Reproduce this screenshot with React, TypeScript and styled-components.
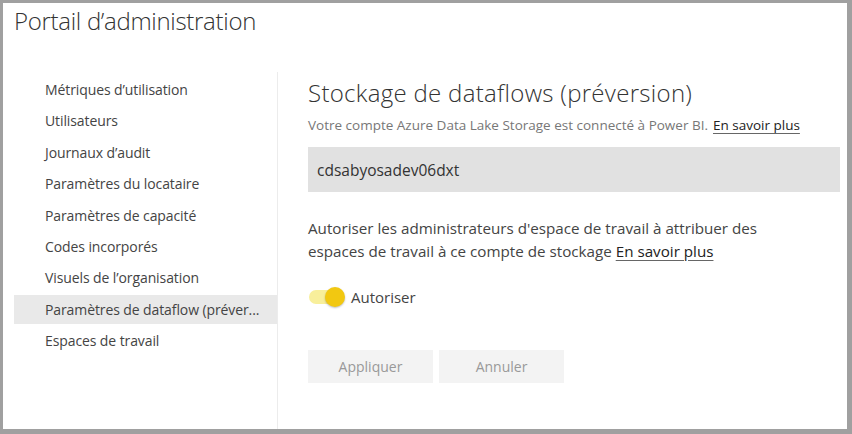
import React from "react";
import styled, { createGlobalStyle } from "styled-components";

const Global = createGlobalStyle`
  html, body { margin: 0; padding: 0; background: #a0a0a0; }
  body { font-family: "Segoe UI", "Open Sans", "Noto Sans", sans-serif; }
  * { box-sizing: border-box; }
`;

const Frame = styled.div`
  width: 852px;
  height: 434px;
  padding: 3px 5px 5px 3px;
  background: #a0a0a0;
`;

const Window = styled.div`
  width: 100%;
  height: 100%;
  background: #fff;
  display: flex;
  flex-direction: column;
  overflow: hidden;
`;

const Title = styled.h1`
  margin: 0;
  padding: 2px 0 0 11px;
  height: 69px;
  font-family: "Open Sans", sans-serif;
  font-weight: 300;
  font-size: 24px;
  line-height: 32px;
  color: #333;
  letter-spacing: -0.3px;
`;

const Body = styled.div`
  flex: 1;
  display: flex;
`;

const Sidebar = styled.nav`
  width: 275px;
  padding: 3px 0 0 11px;
  border-right: 1px solid #ececec;
  display: flex;
  flex-direction: column;
  gap: 2.4px;
`;

const NavItem = styled.div<{ $active?: boolean }>`
  height: 29px;
  display: flex;
  align-items: center;
  padding-left: 31px;
  font-size: 14px;
  color: #444;
  background: ${(p) => (p.$active ? "#e9e9e9" : "transparent")};
  white-space: nowrap;
  font-family: "Open Sans", sans-serif;
  letter-spacing: -0.1px;
`;

const Panel = styled.section`
  flex: 1;
  padding: 5px 7px 0 30px;
  display: flex;
  flex-direction: column;
`;

const Heading = styled.h2`
  margin: 0;
  font-family: "Open Sans", sans-serif;
  font-weight: 300;
  font-size: 24px;
  line-height: 32px;
  color: #333;
  letter-spacing: 0.3px;
`;

const Sub = styled.p`
  margin: 7px 0 0;
  font-size: 13.5px;
  line-height: 18px;
  color: #777;
  font-family: "Open Sans", sans-serif;
  white-space: nowrap;
`;

const Link = styled.a`
  color: #222;
  text-decoration: underline;
  text-underline-offset: 3px;
  text-decoration-color: #666;
`;

const SubLink = styled(Link)`
  margin-left: 5px;
`;

const Input = styled.div`
  margin-top: 13px;
  height: 45px;
  background: #e1e1e1;
  display: flex;
  align-items: center;
  padding-left: 9px;
  font-size: 15.5px;
  color: #333;
  font-family: "Open Sans", sans-serif;
`;

const Para = styled.p`
  margin: 25px 0 0;
  font-size: 15.2px;
  line-height: 23px;
  color: #444;
  width: 480px;
  font-family: "Open Sans", sans-serif;
`;

const ToggleRow = styled.label`
  margin-top: 24px;
  display: flex;
  align-items: center;
  gap: 6px;
  font-size: 15px;
  color: #444;
  font-family: "Open Sans", sans-serif;
`;

const Track = styled.span`
  position: relative;
  width: 37px;
  height: 20px;
  display: inline-block;
`;

const TrackBar = styled.span`
  position: absolute;
  left: 1px;
  top: 3px;
  width: 30px;
  height: 14px;
  border-radius: 7px;
  background: #f8ef9b;
`;

const Knob = styled.span`
  position: absolute;
  right: 0;
  top: 0;
  width: 20px;
  height: 20px;
  border-radius: 50%;
  background: #f2c811;
  box-shadow: 0 1px 2px rgba(0, 0, 0, 0.25);
`;

const Buttons = styled.div`
  margin-top: 43px;
  display: flex;
  gap: 6px;
`;

const Button = styled.button`
  width: 125px;
  height: 33px;
  border: none;
  background: #f3f3f3;
  color: #999;
  font-size: 14px;
  font-family: "Open Sans", sans-serif;
  padding: 0;
`;

const items = [
  "Métriques d’utilisation",
  "Utilisateurs",
  "Journaux d’audit",
  "Paramètres du locataire",
  "Paramètres de capacité",
  "Codes incorporés",
  "Visuels de l’organisation",
  "Paramètres de dataflow (préver...",
  "Espaces de travail",
];

export default function App() {
  return (
    <>
      <Global />
      <Frame>
        <Window>
          <Title>Portail d’administration</Title>
          <Body>
            <Sidebar>
              {items.map((t, i) => (
                <NavItem key={t} $active={i === 7}>
                  {t}
                </NavItem>
              ))}
            </Sidebar>
            <Panel>
              <Heading>Stockage de dataflows (préversion)</Heading>
              <Sub>
                Votre compte Azure Data Lake Storage est connecté à Power BI.
                <SubLink>En savoir plus</SubLink>
              </Sub>
              <Input>cdsabyosadev06dxt</Input>
              <Para>
                Autoriser les administrateurs d'espace de travail à attribuer des
                espaces de travail à ce compte de stockage <Link>En savoir plus</Link>
              </Para>
              <ToggleRow>
                <Track>
                  <TrackBar />
                  <Knob />
                </Track>
                Autoriser
              </ToggleRow>
              <Buttons>
                <Button>Appliquer</Button>
                <Button>Annuler</Button>
              </Buttons>
            </Panel>
          </Body>
        </Window>
      </Frame>
    </>
  );
}
